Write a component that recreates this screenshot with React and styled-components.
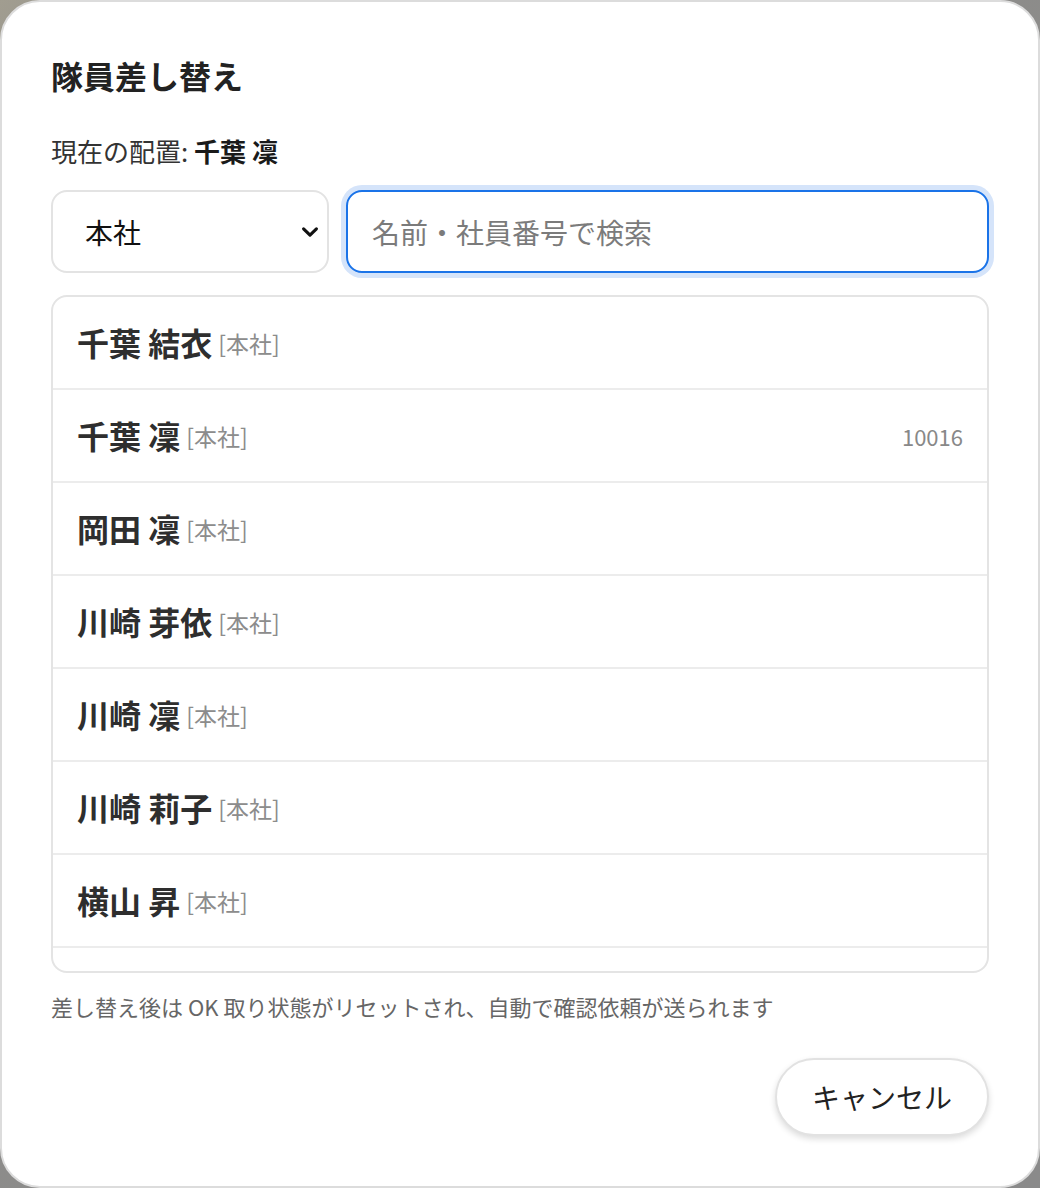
import React, { useState } from "react"
import styled, { createGlobalStyle } from "styled-components"

const GlobalStyle = createGlobalStyle`
  html, body {
    margin: 0;
    padding: 0;
    height: 100%;
  }
  body {
    background: linear-gradient(135deg, #a19d90 0%, #8e8d8a 12%, #8a8a8a 100%);
    font-family: "Noto Sans CJK JP", "Noto Sans", sans-serif;
  }
  * { box-sizing: border-box; }
`

const Sheet = styled.div`
  width: 100vw;
  height: 100vh;
  background: #fff;
  border: 2px solid #dcdcdc;
  border-radius: 40px;
  padding: 51px 49px 50px;
  display: flex;
  flex-direction: column;
  overflow: hidden;
`

const Title = styled.h2`
  margin: 0;
  font-size: 32px;
  line-height: 45px;
  font-weight: 700;
  color: #222;
`

const Current = styled.div`
  margin-top: 34px;
  font-size: 26px;
  line-height: 38px;
  color: #333;
  strong {
    color: #1a1a1a;
  }
`

const Controls = styled.div`
  margin-top: 20px;
  display: flex;
  gap: 17px;
  height: 83px;
  flex: none;
`

const SelectWrap = styled.div`
  position: relative;
  width: 278px;
  flex: none;
`

const Select = styled.select`
  appearance: none;
  width: 100%;
  height: 100%;
  border: 2px solid #e3e3e3;
  border-radius: 16px;
  background: #fff;
  padding: 0 40px 0 32px;
  font-family: inherit;
  font-size: 28px;
  color: #111;
  outline: none;
`

const Chevron = styled.svg`
  position: absolute;
  right: 8px;
  top: 50%;
  transform: translateY(-50%);
  pointer-events: none;
`

const Search = styled.input`
  flex: 1;
  min-width: 0;
  height: 100%;
  border: 2px solid #1a73e8;
  border-radius: 16px;
  box-shadow: 0 0 0 5px #d5e4fa;
  padding: 0 24px;
  font-family: inherit;
  font-size: 28px;
  color: #111;
  outline: none;
  &::placeholder {
    color: #7b7b7b;
  }
`

const List = styled.ul`
  list-style: none;
  margin: 22px 0 0;
  padding: 0;
  height: 678px;
  flex: none;
  border: 2px solid #e4e4e4;
  border-radius: 16px;
  overflow-y: auto;
  scrollbar-width: none;
  &::-webkit-scrollbar { display: none; }
`

const Row = styled.li`
  display: flex;
  align-items: center;
  padding: 23px 24px 23px 24px;
  border-bottom: 2px solid #ececec;
  cursor: pointer;
`

const Name = styled.span`
  font-size: 32px;
  line-height: 45px;
  font-weight: 700;
  color: #2e2e2e;
`

const Branch = styled.span`
  margin-left: 6px;
  font-size: 23px;
  color: #8c8c8c;
`

const Code = styled.span`
  margin-left: auto;
  font-size: 22px;
  color: #888;
`

const Note = styled.p`
  margin: 16px 0 0;
  font-size: 22px;
  line-height: 34px;
  color: #666;
`

const Footer = styled.div`
  margin-top: 35px;
  display: flex;
  justify-content: flex-end;
`

const CancelButton = styled.button`
  width: 214px;
  height: 78px;
  border: 2px solid #e2e2e2;
  border-radius: 39px;
  background: #fff;
  box-shadow: 0 3px 6px rgba(0, 0, 0, 0.14);
  font-family: inherit;
  font-size: 28px;
  color: #222;
  cursor: pointer;
`

const members = [
  { name: "千葉 結衣", branch: "本社" },
  { name: "千葉 凜", branch: "本社", code: "10016" },
  { name: "岡田 凜", branch: "本社" },
  { name: "川崎 芽依", branch: "本社" },
  { name: "川崎 凜", branch: "本社" },
  { name: "川崎 莉子", branch: "本社" },
  { name: "横山 昇", branch: "本社" },
  { name: "横山 結衣", branch: "本社" },
]

const App = () => {
  const [branch, setBranch] = useState("本社")
  const [query, setQuery] = useState("")

  return (
    <>
      <GlobalStyle />
      <Sheet>
        <Title>隊員差し替え</Title>
        <Current>
          現在の配置: <strong>千葉 凜</strong>
        </Current>

        <Controls>
          <SelectWrap>
            <Select value={branch} onChange={e => setBranch(e.target.value)}>
              <option>本社</option>
              <option>支社</option>
            </Select>
            <Chevron width="22" height="22" viewBox="0 0 24 24" fill="none">
              <path d="M5 8.5l7 7 7-7" stroke="#111" strokeWidth="3.4" strokeLinecap="round" strokeLinejoin="round" />
            </Chevron>
          </SelectWrap>
          <Search
            autoFocus
            placeholder="名前・社員番号で検索"
            value={query}
            onChange={e => setQuery(e.target.value)}
          />
        </Controls>

        <List>
          {members.map((m, i) => (
            <Row key={i}>
              <Name>{m.name}</Name>
              <Branch>[{m.branch}]</Branch>
              {m.code && <Code>{m.code}</Code>}
            </Row>
          ))}
        </List>

        <Note>差し替え後は OK 取り状態がリセットされ、自動で確認依頼が送られます</Note>

        <Footer>
          <CancelButton>キャンセル</CancelButton>
        </Footer>
      </Sheet>
    </>
  )
}

export default App
